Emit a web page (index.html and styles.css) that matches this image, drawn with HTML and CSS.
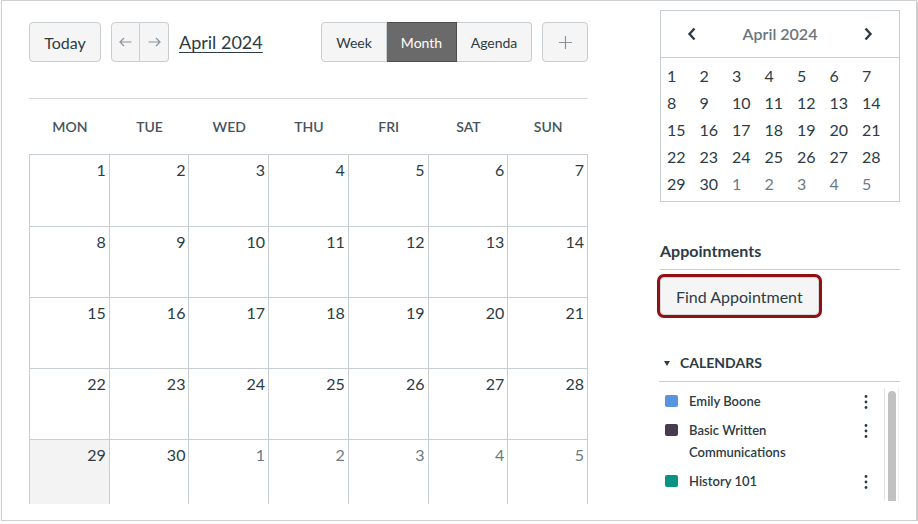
FILE: index.html
```html
<!DOCTYPE html>
<html lang="en">
<head>
<meta charset="utf-8">
<title>Calendar</title>
<link rel="stylesheet" href="styles.css">
</head>
<body>
<div class="frame">
  <main class="main">
    <div class="toolbar">
      <div class="tb-left">
        <button class="btn btn-today">Today</button>
        <div class="btn-group nav">
          <button class="btn btn-arrow" aria-label="Previous"><svg width="13" height="10" viewBox="0 0 13 10"><path d="M12.5 5H1M5 1L1 5L5 9" fill="none" stroke="#8b949b" stroke-width="1.2"/></svg></button>
          <button class="btn btn-arrow" aria-label="Next"><svg width="13" height="10" viewBox="0 0 13 10"><path d="M0.5 5H12M8 1L12 5L8 9" fill="none" stroke="#8b949b" stroke-width="1.2"/></svg></button>
        </div>
        <a class="title" href="#">April 2024</a>
      </div>
      <div class="tb-right">
        <div class="btn-group views">
          <button class="btn btn-view">Week</button>
          <button class="btn btn-view active">Month</button>
          <button class="btn btn-view">Agenda</button>
        </div>
        <button class="btn btn-plus" aria-label="Add"><svg width="13" height="13" viewBox="0 0 13 13"><path d="M6.5 0V13M0 6.5H13" fill="none" stroke="#8b949b" stroke-width="1.2"/></svg></button>
      </div>
    </div>
    <div class="rule"></div>
    <div class="dow">
      <span>MON</span><span>TUE</span><span>WED</span><span>THU</span><span>FRI</span><span>SAT</span><span>SUN</span>
    </div>
    <div class="grid">
      <div class="cell">1</div><div class="cell">2</div><div class="cell">3</div><div class="cell">4</div><div class="cell">5</div><div class="cell">6</div><div class="cell">7</div>
      <div class="cell">8</div><div class="cell">9</div><div class="cell">10</div><div class="cell">11</div><div class="cell">12</div><div class="cell">13</div><div class="cell">14</div>
      <div class="cell">15</div><div class="cell">16</div><div class="cell">17</div><div class="cell">18</div><div class="cell">19</div><div class="cell">20</div><div class="cell">21</div>
      <div class="cell">22</div><div class="cell">23</div><div class="cell">24</div><div class="cell">25</div><div class="cell">26</div><div class="cell">27</div><div class="cell">28</div>
      <div class="cell last today">29</div><div class="cell last">30</div><div class="cell last other">1</div><div class="cell last other">2</div><div class="cell last other">3</div><div class="cell last other">4</div><div class="cell last other">5</div>
    </div>
  </main>

  <aside class="side">
    <div class="mini">
      <div class="mini-head">
        <svg class="chev" width="10" height="14" viewBox="0 0 10 14"><path d="M7.5 1.5L2.5 7L7.5 12.5" fill="none" stroke="#2d3b45" stroke-width="2.4"/></svg>
        <span class="mini-title">April 2024</span>
        <svg class="chev" width="10" height="14" viewBox="0 0 10 14"><path d="M2.5 1.5L7.5 7L2.5 12.5" fill="none" stroke="#2d3b45" stroke-width="2.4"/></svg>
      </div>
      <div class="mini-days">
        <span>1</span><span>2</span><span>3</span><span>4</span><span>5</span><span>6</span><span>7</span>
        <span>8</span><span>9</span><span>10</span><span>11</span><span>12</span><span>13</span><span>14</span>
        <span>15</span><span>16</span><span>17</span><span>18</span><span>19</span><span>20</span><span>21</span>
        <span>22</span><span>23</span><span>24</span><span>25</span><span>26</span><span>27</span><span>28</span>
        <span>29</span><span>30</span><span class="other">1</span><span class="other">2</span><span class="other">3</span><span class="other">4</span><span class="other">5</span>
      </div>
    </div>

    <h2 class="side-h">Appointments</h2>
    <button class="btn btn-find">Find Appointment</button>

    <div class="cal-h"><span class="tri"></span>CALENDARS</div>
    <div class="cal-wrap">
      <ul class="cal-list">
        <li class="cal-item">
          <span class="swatch sw-blue"></span>
          <span class="cal-name">Emily Boone</span>
          <svg class="kebab" width="4" height="16" viewBox="0 0 4 16"><circle cx="2" cy="2.5" r="1.4"/><circle cx="2" cy="8" r="1.4"/><circle cx="2" cy="13.5" r="1.4"/></svg>
        </li>
        <li class="cal-item">
          <span class="swatch sw-plum"></span>
          <span class="cal-name">Basic Written Communications</span>
          <svg class="kebab" width="4" height="16" viewBox="0 0 4 16"><circle cx="2" cy="2.5" r="1.4"/><circle cx="2" cy="8" r="1.4"/><circle cx="2" cy="13.5" r="1.4"/></svg>
        </li>
        <li class="cal-item">
          <span class="swatch sw-teal"></span>
          <span class="cal-name">History 101</span>
          <svg class="kebab" width="4" height="16" viewBox="0 0 4 16"><circle cx="2" cy="2.5" r="1.4"/><circle cx="2" cy="8" r="1.4"/><circle cx="2" cy="13.5" r="1.4"/></svg>
        </li>
      </ul>
      <div class="scrollbar"><div class="thumb"></div></div>
    </div>
  </aside>
</div>
</body>
</html>
```

FILE: styles.css
```css
* { box-sizing: border-box; }

html, body {
  margin: 0;
  padding: 0;
  background: #ffffff;
}

body {
  font-family: Lato, "Noto Sans", "Liberation Sans", sans-serif;
  color: #2d3b45;
}

.frame {
  margin-left: 1px;
  width: 916px;
  height: 521px;
  border: 1px solid #cfcfcf;
  box-shadow: 1px 2px 2px rgba(0, 0, 0, 0.3);
  background: #ffffff;
  display: flex;
  overflow: hidden;
}

/* ---------- main calendar ---------- */
.main {
  width: 586px;
  padding: 21px 0 0 27px;
  flex: none;
}

.toolbar {
  height: 40px;
  display: flex;
  justify-content: space-between;
  align-items: stretch;
}

.tb-left, .tb-right {
  display: flex;
  align-items: stretch;
}

.btn {
  font-family: inherit;
  color: #2d3b45;
  background: #f5f5f5;
  border: 1px solid #c7cdd1;
  border-radius: 4px;
  margin: 0;
  padding: 0;
  display: flex;
  align-items: center;
  justify-content: center;
  cursor: pointer;
}

.btn-today {
  width: 72px;
  font-size: 16px;
}

.btn-group {
  display: flex;
}

.btn-group .btn {
  border-radius: 0;
}

.btn-group .btn:first-child {
  border-radius: 4px 0 0 4px;
}

.btn-group .btn:last-child {
  border-radius: 0 4px 4px 0;
}

.btn-group .btn + .btn {
  border-left: none;
}

.nav {
  margin-left: 10px;
}

.btn-arrow {
  width: 29px;
}

.title {
  margin-left: 10px;
  align-self: center;
  font-size: 18px;
  color: #2d3b45;
  text-decoration: underline;
  text-underline-offset: 3px;
  text-decoration-thickness: 1px;
}

.btn-view {
  font-size: 14px;
  height: 40px;
}

.views .btn-view:nth-child(1) { width: 66px; }
.views .btn-view:nth-child(2) { width: 70px; }
.views .btn-view:nth-child(3) { width: 75px; }

.btn-view.active {
  background: #6a6a6a;
  border: 1px solid #4d4d4d;
  color: #ffffff;
}

.btn-plus {
  width: 46px;
  margin-left: 10px;
}

.rule {
  margin-top: 36px;
  height: 1px;
  background: #d6dadd;
  width: 559px;
}

.dow {
  height: 55px;
  width: 559px;
  display: grid;
  grid-template-columns: repeat(7, 1fr);
  align-items: center;
  text-align: center;
  font-size: 14px;
  font-weight: 600;
  color: #46535d;
  padding-left: 1px;
}

.grid {
  width: 559px;
  display: grid;
  grid-template-columns: repeat(7, 1fr);
  grid-template-rows: 72px 71px 71px 71px 64px;
  border-top: 1px solid #c7cdd1;
  border-left: 1px solid #c7cdd1;
}

.cell {
  border-right: 1px solid #c7cdd1;
  border-bottom: 1px solid #c7cdd1;
  text-align: right;
  padding: 5px 3px 0 0;
  font-size: 16px;
  line-height: 20px;
  color: #2d3b45;
}

.cell.last {
  border-bottom: none;
}

.cell.today {
  background: #f3f3f3;
}

.cell.other {
  color: #6e7a83;
}

/* ---------- sidebar ---------- */
.side {
  width: 240px;
  margin-left: 72px;
  padding-top: 9px;
  flex: none;
}

.mini {
  border: 1px solid #c7cdd1;
}

.mini-head {
  height: 47px;
  border-bottom: 1px solid #c7cdd1;
  display: flex;
  align-items: center;
  justify-content: space-between;
  padding: 0 26px 1px 26px;
}

.mini-title {
  font-size: 16px;
  font-weight: 600;
  color: #6b757d;
}

.mini-days {
  display: grid;
  grid-template-columns: repeat(7, 32.5px);
  grid-auto-rows: 27px;
  align-items: center;
  padding: 4px 0 4px 6px;
  font-size: 16px;
  color: #2d3b45;
}

.mini-days .other {
  color: #6e7a83;
}

.side-h {
  margin: 39px 0 0 0;
  font-size: 16px;
  font-weight: 700;
  line-height: 20px;
  padding-bottom: 8px;
  border-bottom: 1px solid #c7cdd1;
}

.btn-find {
  margin-top: 7px;
  height: 38px;
  padding: 0 15px;
  font-size: 16px;
  border-radius: 4px;
  box-shadow: 0 0 0 3px #940f14;
  border-color: #d7d7d7;
}

.cal-h {
  margin-top: 38px;
  line-height: 20px;
  font-size: 14px;
  font-weight: 700;
  padding-bottom: 8px;
  border-bottom: 1px solid #c7cdd1;
  display: flex;
  align-items: center;
  margin-left: -1px;
}

.tri {
  width: 0;
  height: 0;
  border-left: 3.5px solid transparent;
  border-right: 3.5px solid transparent;
  border-top: 5px solid #2d3b45;
  margin: 0 10px 0 5px;
}

.cal-wrap {
  display: flex;
  height: 120px;
}

.cal-list {
  list-style: none;
  margin: 0;
  padding: 5px 0 0 0;
  flex: 1;
}

.cal-item {
  display: flex;
  align-items: flex-start;
  padding: 3px 0 4px 5px;
}

.swatch {
  width: 13px;
  height: 12px;
  border-radius: 2px;
  margin-top: 5px;
  flex: none;
}

.sw-blue { background: #5b94de; }
.sw-plum { background: #4a3a4e; }
.sw-teal { background: #079486; }

.cal-name {
  margin-left: 11px;
  width: 160px;
  font-size: 13px;
  font-weight: 600;
  line-height: 22px;
  color: #2d3b45;
}

.kebab {
  margin: 4px 0 0 15px;
  fill: #2d3b45;
  flex: none;
}

.scrollbar {
  width: 15px;
  margin: 6px 1px 1px 0;
  border-left: 1px solid #e6e6e6;
  border-right: 1px solid #ececec;
  padding: 3px 0 0 3px;
}

.thumb {
  width: 8px;
  height: 110px;
  background: #c1c1c1;
  border-radius: 4px 4px 0 0;
}
```
